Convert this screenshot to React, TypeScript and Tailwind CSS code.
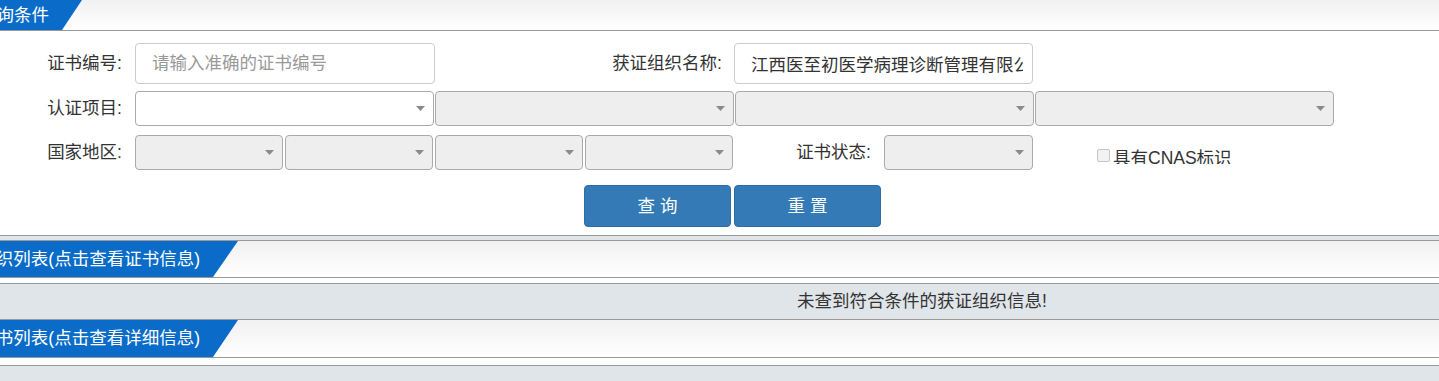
import React from "react";

const FONT = { fontFamily: '"Liberation Sans", "Noto Sans CJK SC", sans-serif' };

function Caret() {
  return (
    <svg width="9" height="5" viewBox="0 0 9 5" className="block">
      <path d="M0 0 L9 0 L4.5 5 Z" fill="#8a8a8a" />
    </svg>
  );
}

function Select({ w, disabled = true }: { w: string; disabled?: boolean }) {
  return (
    <div
      className={`${w} h-full flex items-center justify-end pr-[8px] border border-[#aaaaaa] rounded-[4px] ${
        disabled ? "bg-[#eeeeee]" : "bg-white"
      }`}
    >
      <Caret />
    </div>
  );
}

function Header({
  text,
  h,
  top,
  bottom,
  pr,
}: {
  text: string;
  h: string;
  top: string;
  bottom: string;
  pr: string;
}) {
  return (
    <div className={`${h} flex bg-gradient-to-b from-[#f1f1f1] to-white overflow-hidden`}>
      <div
        className={`${top} h-full bg-[#0a6cc8] text-white flex items-center justify-end ${pr} overflow-hidden whitespace-nowrap`}
        style={{ clipPath: `polygon(0 0, 100% 0, ${bottom} 100%, 0 100%)` }}
      >
        <span className="shrink-0">{text}</span>
      </div>
    </div>
  );
}

export default function App() {
  return (
    <div className="w-[1439px] h-[381px] overflow-hidden bg-white text-[17.5px] text-[#333333]" style={FONT}>
      {/* Header 1 */}
      <div className="border-b border-[#999999]">
        <Header text="查询条件" h="h-[30px]" top="w-[82px]" bottom="62px" pr="pr-[33px]" />
      </div>

      {/* Form */}
      <div className="flex flex-col pt-[12px] pb-[8px] border-b border-[#999999]">
        {/* row 1 */}
        <div className="flex items-center h-[41px]">
          <div className="w-[135px] text-right pr-[13px]">证书编号:</div>
          <input
            readOnly
            placeholder="请输入准确的证书编号"
            className="w-[300px] h-full border border-[#cccccc] rounded-[4px] pl-[16px] pr-[9px] outline-none placeholder:text-[#999999] bg-white"
            style={FONT}
          />
          <div className="w-[299px] text-right pr-[12px]">获证组织名称:</div>
          <input
            readOnly
            value="江西医至初医学病理诊断管理有限公司"
            className="w-[299px] h-full border border-[#cccccc] rounded-[4px] pl-[16px] pr-[9px] outline-none text-[#333333] bg-white"
            style={FONT}
          />
        </div>

        {/* row 2 */}
        <div className="flex items-center h-[35px] mt-[7px]">
          <div className="w-[135px] text-right pr-[13px]">认证项目:</div>
          <div className="flex h-full gap-[1px]">
            <Select w="w-[299px]" disabled={false} />
            <Select w="w-[299px]" />
            <Select w="w-[299px]" />
            <Select w="w-[299px]" />
          </div>
        </div>

        {/* row 3 */}
        <div className="flex items-center h-[35px] mt-[9px]">
          <div className="w-[135px] text-right pr-[13px]">国家地区:</div>
          <div className="flex h-full gap-[2px]">
            <Select w="w-[148px]" />
            <Select w="w-[148px]" />
            <Select w="w-[148px]" />
            <Select w="w-[148px]" />
          </div>
          <div className="w-[151px] text-right pr-[13px]">证书状态:</div>
          <Select w="w-[149px]" />
          <div className="flex items-center ml-[64px] pt-[6px]">
            <span className="w-[13px] h-[13px] border border-[#c6c6c6] rounded-[2px] bg-[#f2f2f2] mr-[3px]" />
            <span className="h-[16px] overflow-hidden leading-[21px]">具有CNAS标识</span>
          </div>
        </div>

        {/* buttons */}
        <div className="flex justify-center pl-[26px] gap-[3px] mt-[15px] h-[42px]">
          <button className="w-[147px] h-full bg-[#337ab7] border border-[#2e6da4] rounded-[4px] text-white tracking-[5px] pl-[5px]">
            查询
          </button>
          <button className="w-[147px] h-full bg-[#337ab7] border border-[#2e6da4] rounded-[4px] text-white tracking-[5px] pl-[5px]">
            重置
          </button>
        </div>
      </div>

      {/* band */}
      <div className="h-[4px] bg-[#e0e5e9]" />

      {/* Header 2 */}
      <div className="border-t border-b border-[#999999]">
        <Header text="获证组织列表(点击查看证书信息)" h="h-[36px]" top="w-[238px]" bottom="213px" pr="pr-[38px]" />
      </div>

      <div className="h-[5px] bg-white" />

      {/* message */}
      <div className="h-[37px] border-t border-b border-[#999999] bg-[#e0e5e9] flex items-center justify-center pl-[405px]">
        未查到符合条件的获证组织信息!
      </div>

      {/* Header 3 */}
      <div className="border-b border-[#999999]">
        <Header text="证书列表(点击查看详细信息)" h="h-[37px]" top="w-[238px]" bottom="213px" pr="pr-[38px]" />
      </div>

      <div className="h-[7px] bg-white" />

      <div className="h-[20px] border-t border-[#999999] bg-[#e0e5e9]" />
    </div>
  );
}
